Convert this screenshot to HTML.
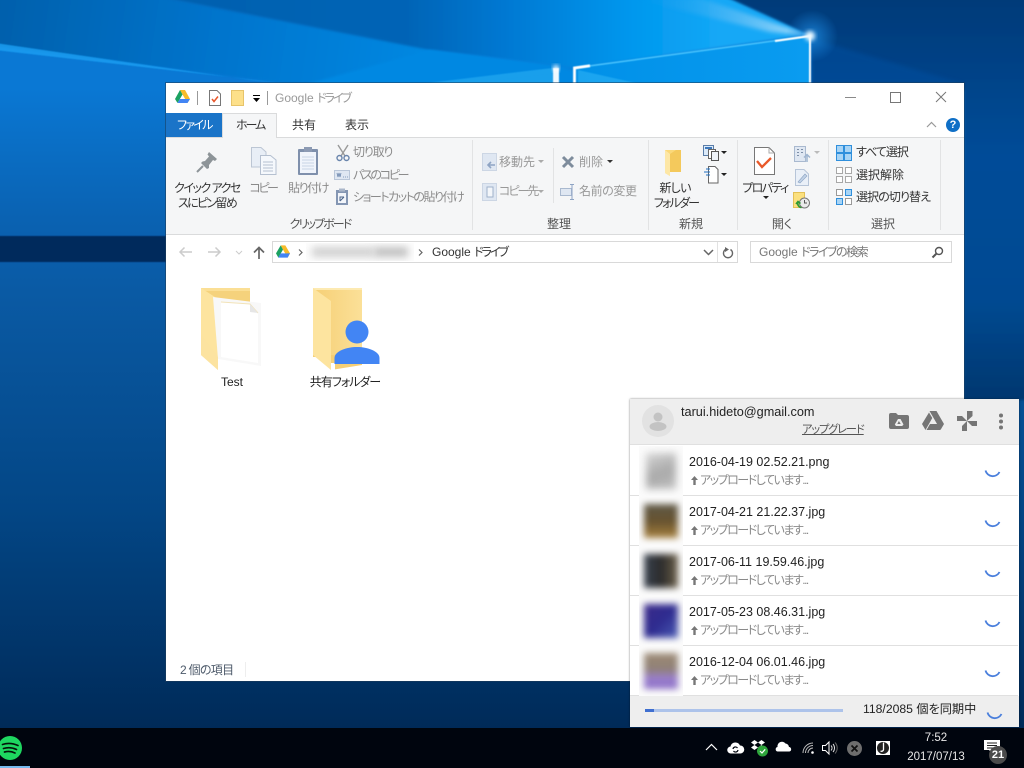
<!DOCTYPE html>
<html lang="ja"><head><meta charset="utf-8"><title>Google ドライブ</title>
<style>
html,body{margin:0;padding:0;width:1024px;height:768px;overflow:hidden;background:#003a78}
body{position:relative;font-family:"Liberation Sans","Noto Sans CJK JP",sans-serif;font-size:12px;font-feature-settings:"palt" 1}
svg{position:absolute;overflow:visible}
.a{position:absolute;white-space:nowrap;line-height:16px;height:16px}
.c{transform:translateX(-50%)}
.g{color:#8b8b8b}.k{color:#333}
.b{position:absolute}
.row{position:absolute;left:630px;width:388px;height:50px;background:#fff;border-bottom:1px solid #e0e0e0;box-sizing:border-box}
.name{position:absolute;left:59px;top:8px;font-size:12.500px;line-height:16px;color:#222;white-space:nowrap}
.sub{position:absolute;left:70px;top:26px;font-size:12px;line-height:16px;color:#8a8a8a;white-space:nowrap;letter-spacing:-1.500px}
.up{position:absolute;left:61px;top:30px;width:7px;height:9px}
.th{position:absolute;left:639px;width:44px;height:50px;background:#fbfbfb;overflow:hidden}
.n{letter-spacing:-2px}
</style></head><body>

<svg width="1024" height="768" style="left:0;top:0" viewBox="0 0 1024 768">
<defs>
<linearGradient id="w1" x1="0" y1="0" x2="0" y2="1"><stop offset="0" stop-color="#0a78d4"/><stop offset=".12" stop-color="#0a78d4"/><stop offset=".3" stop-color="#0a62b2"/><stop offset=".4" stop-color="#0a5aa4"/><stop offset=".7" stop-color="#034685"/><stop offset="1" stop-color="#002a58"/></linearGradient>
<linearGradient id="w2" gradientUnits="userSpaceOnUse" x1="150" y1="0" x2="720" y2="0"><stop offset="0" stop-color="#0060ae"/><stop offset=".45" stop-color="#0064b6"/><stop offset=".62" stop-color="#0078d2"/><stop offset=".85" stop-color="#0098ee"/><stop offset="1" stop-color="#14a8f6"/></linearGradient>
<linearGradient id="w3" x1="0" y1="0" x2="0" y2="1"><stop offset="0" stop-color="#023a78"/><stop offset=".4" stop-color="#034c98"/><stop offset=".75" stop-color="#044a92"/><stop offset="1" stop-color="#00376f"/></linearGradient>
<linearGradient id="w4" gradientUnits="userSpaceOnUse" x1="0" y1="0" x2="430" y2="60"><stop offset="0" stop-color="#0060ac"/><stop offset=".5" stop-color="#0074cc"/><stop offset="1" stop-color="#0088e2"/></linearGradient>
<linearGradient id="w5" x1="0" y1="0" x2="1" y2="0"><stop offset="0" stop-color="#0090e8"/><stop offset="1" stop-color="#0a9cf0"/></linearGradient>
<linearGradient id="w6" x1="0" y1="0" x2="1" y2="0"><stop offset="0" stop-color="#0a90e8" stop-opacity="0"/><stop offset="1" stop-color="#e8f6ff"/></linearGradient>
<radialGradient id="w7"><stop offset="0" stop-color="#1c8ae0" stop-opacity=".8"/><stop offset="1" stop-color="#1c8ae0" stop-opacity="0"/></radialGradient>
<filter id="bl2" x="-30%" y="-30%" width="160%" height="160%"><feGaussianBlur stdDeviation="2"/></filter>
<filter id="bl1" x="-30%" y="-30%" width="160%" height="160%"><feGaussianBlur stdDeviation=".6"/></filter>
<filter id="bl3" x="-10%" y="-10%" width="120%" height="120%"><feGaussianBlur stdDeviation="1.200"/></filter>
</defs>
<rect width="1024" height="730" fill="url(#w1)"/>
<polygon points="-5,-5 150,-5 440,50 575,70 575,90 290,84 -5,46" fill="url(#w4)" filter="url(#bl3)"/>
<polygon points="150,-5 725,-5 812,34 575,68 430,50" fill="url(#w2)" filter="url(#bl3)"/>
<polygon points="430,50 575,68 420,86 300,86" fill="#0088e2" filter="url(#bl3)"/>
<polygon points="630,-2 700,-2 812,36 770,32" fill="url(#w6)" filter="url(#bl2)" opacity=".75"/>
<polygon points="722,-5 1030,-5 1030,400 964,400 964,90 812,90 812,36" fill="url(#w3)" filter="url(#bl3)"/>
<polygon points="810,38 964,84 810,84" fill="#034e9c" opacity=".6" filter="url(#bl2)"/>
<circle cx="812" cy="36" r="26" fill="url(#w7)"/>
<polygon points="575,68 810,36 810,84 575,84" fill="url(#w5)"/>
<polygon points="420,84 535,70 553,68 553,84" fill="#2eb2f4" opacity=".55" filter="url(#bl1)"/>
<polygon points="578,70 640,84 578,84" fill="#30b6f6" opacity=".55" filter="url(#bl1)"/>
<rect x="553" y="68" width="6" height="16" fill="#eef9ff" filter="url(#bl1)"/>
<path d="M574 68L810 36" fill="none" stroke="#4cc6ff" stroke-width="1.500" filter="url(#bl1)"/>
<path d="M574.500 84V68L590 65.800" fill="none" stroke="#fff" stroke-width="2.800" filter="url(#bl1)"/>
<path d="M775 41L810 36V84" fill="none" stroke="#fff" stroke-width="2" filter="url(#bl1)"/>
<circle cx="810" cy="36" r="5" fill="#eaf8ff" filter="url(#bl2)"/>
<circle cx="556" cy="68" r="3" fill="#fff" filter="url(#bl2)"/>
<polygon points="-5,43 250,80 290,84 -5,50" fill="#1aa0f4" opacity=".8" filter="url(#bl1)"/>
<rect x="-5" y="236" width="175" height="26" fill="#032c5c" filter="url(#bl1)"/>
</svg>

<!-- window -->
<div class="b" style="left:166px;top:83px;width:798px;height:598px;background:#fff;box-shadow:0 0 0 1px rgba(30,60,90,.55)"></div>
<div class="b" style="left:166px;top:138px;width:798px;height:96px;background:#f5f6f7;border-top:1px solid #dadbdc;border-bottom:1px solid #dadbdc;box-sizing:content-box;margin-top:-1px"></div>
<div class="b" style="left:166px;top:113px;width:56px;height:24px;background:#1a74c8"></div>
<div class="b" style="left:222px;top:113px;width:55px;height:25px;background:#f5f6f7;border:1px solid #dadbdc;border-bottom:none;box-sizing:border-box"></div>

<!-- ribbon separators -->
<div class="b" style="left:472px;top:140px;width:1px;height:90px;background:#e2e3e4"></div>
<div class="b" style="left:648px;top:140px;width:1px;height:90px;background:#e2e3e4"></div>
<div class="b" style="left:737px;top:140px;width:1px;height:90px;background:#e2e3e4"></div>
<div class="b" style="left:828px;top:140px;width:1px;height:90px;background:#e2e3e4"></div>
<div class="b" style="left:940px;top:140px;width:1px;height:90px;background:#e2e3e4"></div>
<div class="b" style="left:553px;top:148px;width:1px;height:55px;background:#e2e3e4"></div>

<!-- title bar -->
<svg style="left:175px;top:90px" width="15" height="14" viewBox="0 0 15 14"><polygon points="5,0 10,0 15,9 12.500,13 7.500,4.500" fill="#f7bb2a"/><polygon points="5,0 7.500,4.500 2.500,13 0,9" fill="#1ca261"/><polygon points="4.800,9 15,9 12.500,13 2.500,13" fill="#4285f4"/></svg>
<div class="b" style="left:197px;top:91px;width:1px;height:14px;background:#999"></div>
<svg style="left:208px;top:90px" width="14" height="16" viewBox="0 0 14 16"><path d="M1.500.5H9L12.500 4V15.500H1.500Z" fill="#fff" stroke="#777"/><path d="M4 9L6 11.500L10 6.500" fill="none" stroke="#e8562a" stroke-width="1.500"/></svg>
<svg style="left:231px;top:90px" width="14" height="16" viewBox="0 0 14 16"><rect x=".5" y=".5" width="12" height="15" fill="#fde08a" stroke="#e7c46a"/></svg>
<svg style="left:252px;top:94px" width="9" height="9" viewBox="0 0 9 9"><rect x="1" y="1" width="7" height="1" fill="#000"/><polygon points="1,4 8,4 4.500,8" fill="#000"/></svg>
<div class="b" style="left:267px;top:91px;width:1px;height:14px;background:#999"></div>
<div class="a" style="left:275px;top:90px;color:#999">Google <span class="n">ドライブ</span></div>

<div class="b" style="left:845px;top:97px;width:11px;height:1px;background:#8a8a8a"></div>
<div class="b" style="left:890px;top:92px;width:11px;height:11px;border:1px solid #777;box-sizing:border-box"></div>
<svg style="left:935px;top:91px" width="12" height="12" viewBox="0 0 12 12"><path d="M1 1L11 11M11 1L1 11" stroke="#777" stroke-width="1" fill="none"/></svg>

<!-- tabs -->
<div class="a" style="left:177px;top:117px;color:#fff;letter-spacing:-1.700px">ファイル</div>
<div class="a" style="left:236px;top:117px;color:#333;letter-spacing:-2px">ホーム</div>
<div class="a" style="left:292px;top:117px;color:#333">共有</div>
<div class="a" style="left:345px;top:117px;color:#333">表示</div>
<svg style="left:926px;top:121px" width="11" height="7" viewBox="0 0 11 7"><path d="M1 6L5.500 1.500L10 6" fill="none" stroke="#999" stroke-width="1.200"/></svg>
<div class="b" style="left:946px;top:118px;width:14px;height:14px;border-radius:50%;background:#0f6fc6;color:#fff;font-weight:bold;font-size:11px;line-height:14px;text-align:center">?</div>

<!-- clipboard group -->
<svg style="left:196px;top:151px" width="22" height="22" viewBox="0 0 22 22"><path d="M13 1L21 8L19 10L17 9L13 14L13 17L11 18L5 12L6.500 10.500L9 10L13 5.500L11.500 3.500Z" fill="#8d9498"/><path d="M7 15L1 21" stroke="#8d9498" stroke-width="2"/></svg>
<div class="a c k" style="left:207px;top:180px;letter-spacing:-1.500px">クイック アクセ</div>
<div class="a c k" style="left:207px;top:195px;letter-spacing:-1.700px">スにピン留め</div>
<svg style="left:251px;top:147px" width="26" height="28" viewBox="0 0 26 28"><path d="M.5.500H10L15 5V20H.5Z" fill="#e8eef6" stroke="#bcc6d4"/><path d="M9.500 8.500H19.500L25 13V27.500H9.500Z" fill="#f5f8fc" stroke="#b5c0d0"/><path d="M12 15H22M12 18H22M12 21H22M12 24H22" stroke="#b5c0d0"/></svg>
<div class="a c g" style="left:263px;top:180px;letter-spacing:-2.500px">コピー</div>
<svg style="left:297px;top:146px" width="22" height="30" viewBox="0 0 22 30"><rect x="1" y="3" width="20" height="26" rx="1" fill="#7f90ac"/><rect x="3" y="6" width="16" height="21" fill="#f0f4fb"/><path d="M5 11H17M5 14H17M5 17H17M5 20H17M5 23H17" stroke="#c9d3e6"/><rect x="7" y="1" width="8" height="5" fill="#8c9ab3"/></svg>
<div class="a c g" style="left:308px;top:180px;letter-spacing:-1.500px">貼り付け</div>
<svg style="left:336px;top:144px" width="14" height="18" viewBox="0 0 14 18"><path d="M2 1L9 12M12 1L5 12" stroke="#999" stroke-width="1.400" fill="none"/><circle cx="3.500" cy="14" r="2.500" fill="none" stroke="#6a85ac" stroke-width="1.400"/><circle cx="10.500" cy="14" r="2.500" fill="none" stroke="#6a85ac" stroke-width="1.400"/></svg>
<div class="a g" style="left:353px;top:144px;letter-spacing:-1.200px">切り取り</div>
<svg style="left:334px;top:170px" width="16" height="10" viewBox="0 0 16 10"><rect x=".5" y=".5" width="15" height="9" fill="#dfe7f2" stroke="#b9c6d8"/><path d="M3 3L4 7L5 3L6 7L7 3M9 7H10M11 7H12M13 7H14" stroke="#6a85ac" fill="none" stroke-width=".8"/></svg>
<div class="a g" style="left:353px;top:167px;letter-spacing:-2.300px">パスのコピー</div>
<svg style="left:335px;top:188px" width="14" height="18" viewBox="0 0 14 18"><rect x="1" y="2" width="12" height="15" fill="#8496b3"/><rect x="4" y=".5" width="6" height="3" fill="#aab6c9"/><rect x="3" y="5" width="8" height="10" fill="#f2f5fa"/><path d="M5 13V9H9M5 13L9 9" stroke="#4a6389" fill="none"/></svg>
<div class="a g" style="left:353px;top:189px;letter-spacing:-1.500px">ショートカットの貼り付け</div>
<div class="a c k" style="left:320px;top:216px;color:#555;letter-spacing:-1.900px">クリップボード</div>

<!-- organise -->
<svg style="left:482px;top:153px" width="15" height="18" viewBox="0 0 15 18"><rect x=".5" y=".5" width="14" height="17" fill="#dfe7f2" stroke="#ccd6e4"/><path d="M13 12H7M9 9L6 12L9 15" stroke="#8ea4c4" stroke-width="1.600" fill="none"/></svg>
<div class="a g" style="left:499px;top:154px;color:#999">移動先</div>
<svg style="left:538px;top:160px" width="6" height="4"><polygon points="0,0 6,0 3,3" fill="#aaa"/></svg>
<svg style="left:482px;top:183px" width="15" height="18" viewBox="0 0 15 18"><rect x=".5" y=".5" width="14" height="17" fill="#dfe7f2" stroke="#ccd6e4"/><path d="M5 4H11V14H5Z" fill="#f3f6fa" stroke="#9fb1ca"/></svg>
<div class="a g" style="left:499px;top:183px;color:#999;letter-spacing:-2px">コピー先</div>
<svg style="left:538px;top:190px" width="6" height="4"><polygon points="0,0 6,0 3,3" fill="#aaa"/></svg>
<svg style="left:561px;top:155px" width="14" height="14" viewBox="0 0 14 14"><path d="M2 2L12 12M12 2L2 12" stroke="#7e8c9c" stroke-width="3" fill="none"/></svg>
<div class="a g" style="left:579px;top:154px;color:#999">削除</div>
<svg style="left:607px;top:160px" width="6" height="4"><polygon points="0,0 6,0 3,3" fill="#333"/></svg>
<svg style="left:560px;top:184px" width="16" height="16" viewBox="0 0 16 16"><rect x=".5" y="4.500" width="11" height="7" fill="#dfe7f2" stroke="#a9b9cf"/><path d="M10 .5H14M12 .5V15.500M10 15.500H14" stroke="#8ea4c4" fill="none"/></svg>
<div class="a g" style="left:579px;top:183px;color:#999;letter-spacing:-.4px">名前の変更</div>
<div class="a c k" style="left:559px;top:216px;color:#555">整理</div>

<!-- new -->
<svg style="left:664px;top:148px" width="20" height="28" viewBox="0 0 20 28"><polygon points="1,2 17,2 17,24 6,24 6,28 1,25" fill="#fbd97a"/><polygon points="1,2 6,6 6,28 1,25" fill="#fde7a6"/><polygon points="6,6 12,2 17,2 17,24 6,24" fill="#f4c95c"/></svg>
<div class="a c k" style="left:675px;top:180px;letter-spacing:-.7px">新しい</div>
<div class="a c k" style="left:676px;top:195px;letter-spacing:-1.800px">フォルダー</div>
<svg style="left:703px;top:145px" width="24" height="17" viewBox="0 0 24 17"><rect x=".5" y=".5" width="10" height="10" fill="#dcebfa" stroke="#5a7da8"/><rect x="2" y="2" width="7" height="2" fill="#3d78bc"/><rect x="5.500" y="4.500" width="7" height="9" fill="#fff" stroke="#666"/><rect x="8.500" y="6.500" width="7" height="9" fill="#eef3f9" stroke="#555"/><polygon points="18,6 24,6 21,9" fill="#222"/></svg>
<svg style="left:703px;top:166px" width="24" height="18" viewBox="0 0 24 18"><path d="M5.500 .5H12L15 3.500V17H5.500Z" fill="#fff" stroke="#666"/><path d="M3 3H7M1 6H7M3 9H7" stroke="#1e6fc0" fill="none"/><polygon points="18,7 24,7 21,10" fill="#222"/></svg>
<div class="a c k" style="left:691px;top:216px;color:#555">新規</div>

<!-- open -->
<svg style="left:754px;top:147px" width="21" height="28" viewBox="0 0 21 28"><path d="M.5.500H15L20.500 6V27.500H.5Z" fill="#fff" stroke="#777"/><path d="M15 .5V6H20.500" fill="none" stroke="#aaa"/><path d="M3 14L8 20L17 11" fill="none" stroke="#e9592a" stroke-width="2.300"/></svg>
<div class="a c k" style="left:765px;top:180px;letter-spacing:-1.600px">プロパティ</div>
<svg style="left:763px;top:196px" width="6" height="4"><polygon points="0,0 6,0 3,3" fill="#222"/></svg>
<svg style="left:794px;top:146px" width="26" height="16" viewBox="0 0 26 16"><rect x=".5" y=".5" width="11" height="15" fill="#dfe7f2" stroke="#a9b9cf"/><path d="M3 3.500H5M3 6.500H5M3 9.500H5M7 3.500H9M7 6.500H9" stroke="#7d8fa8"/><path d="M13 16V9M10 11.500L13 8.500L16 11.500" stroke="#9fb5d0" stroke-width="1.500" fill="none"/><polygon points="20,5 26,5 23,8" fill="#bbb"/></svg>
<svg style="left:795px;top:169px" width="14" height="17" viewBox="0 0 14 17"><path d="M.5.500H9L13.500 5V16.500H.5Z" fill="#eaf0f8" stroke="#b7c5d8"/><path d="M3 13L10 5L12 7L5 14Z" fill="#c2d2e6" stroke="#8ca4c4" stroke-width=".6"/></svg>
<svg style="left:793px;top:192px" width="17" height="17" viewBox="0 0 17 17"><rect x=".5" y=".5" width="11" height="15" fill="#fbe07e" stroke="#e3c056"/><circle cx="11.500" cy="11" r="5" fill="#eaeaea" stroke="#777"/><path d="M11.500 8V11H14" stroke="#555" fill="none"/><path d="M8.500 15.500A4 4 0 0 1 5 10M3 12L5 9.500L7.500 11.500" stroke="#2d9a35" stroke-width="1.600" fill="none"/></svg>
<div class="a c k" style="left:782px;top:216px;color:#555">開く</div>

<!-- select -->
<svg style="left:836px;top:145px" width="16" height="16" viewBox="0 0 16 16"><rect width="16" height="16" fill="#2f8fdc"/><rect x="1" y="1" width="6" height="6" fill="#a8d4f5"/><rect x="9" y="1" width="6" height="6" fill="#a8d4f5"/><rect x="1" y="9" width="6" height="6" fill="#a8d4f5"/><rect x="9" y="9" width="6" height="6" fill="#a8d4f5"/></svg>
<div class="a k" style="left:856px;top:144px;letter-spacing:-1px">すべて選択</div>
<svg style="left:836px;top:167px" width="16" height="16" viewBox="0 0 16 16"><g fill="#fff" stroke="#a8a8a8"><rect x=".5" y=".5" width="6" height="6"/><rect x="9.500" y=".5" width="6" height="6"/><rect x=".5" y="9.500" width="6" height="6"/><rect x="9.500" y="9.500" width="6" height="6"/></g></svg>
<div class="a k" style="left:856px;top:167px">選択解除</div>
<svg style="left:836px;top:189px" width="16" height="16" viewBox="0 0 16 16"><g stroke="#2f8fdc"><rect x=".5" y=".5" width="6" height="6" fill="#fff" stroke="#999"/><rect x="9.500" y=".5" width="6" height="6" fill="#a8d4f5"/><rect x=".5" y="9.500" width="6" height="6" fill="#a8d4f5"/><rect x="9.500" y="9.500" width="6" height="6" fill="#fff" stroke="#999"/></g></svg>
<div class="a k" style="left:856px;top:189px;letter-spacing:-.9px">選択の切り替え</div>
<div class="a c k" style="left:883px;top:216px;color:#555">選択</div>

<!-- address bar -->
<svg style="left:178px;top:246px" width="15" height="12" viewBox="0 0 15 12"><path d="M14 6H2M6.500 1.500L2 6L6.500 10.500" stroke="#ccc" stroke-width="1.500" fill="none"/></svg>
<svg style="left:207px;top:246px" width="15" height="12" viewBox="0 0 15 12"><path d="M1 6H13M8.500 1.500L13 6L8.500 10.500" stroke="#ccc" stroke-width="1.500" fill="none"/></svg>
<svg style="left:235px;top:250px" width="8" height="5" viewBox="0 0 8 5"><path d="M1 1L4 4L7 1" stroke="#ccc" fill="none"/></svg>
<svg style="left:253px;top:246px" width="12" height="13" viewBox="0 0 12 13"><path d="M6 13V2M1 6.500L6 1.500L11 6.500" stroke="#666" stroke-width="1.700" fill="none"/></svg>
<div class="b" style="left:272px;top:241px;width:466px;height:22px;border:1px solid #d9d9d9;box-sizing:border-box;background:#fff"></div>
<div class="b" style="left:717px;top:242px;width:1px;height:20px;background:#e2e2e2"></div>
<svg style="left:276px;top:245px" width="14" height="13" viewBox="0 0 15 13"><polygon points="5,0 10,0 15,8.500 12.500,13 7.500,4.500" fill="#f7bb2a"/><polygon points="5,0 7.500,4.500 2.500,13 0,8.500" fill="#1ca261"/><polygon points="4.800,8.500 15,8.500 12.500,13 2.500,13" fill="#4285f4"/></svg>
<svg style="left:298px;top:249px" width="5" height="7" viewBox="0 0 5 7"><path d="M1 .5L4 3.500L1 6.500" stroke="#666" fill="none" stroke-width="1.200"/></svg>
<div class="b" style="left:306px;top:243px;width:108px;height:18px;background:#fdfdfd;overflow:hidden"><div style="position:absolute;left:6px;top:4px;width:62px;height:10px;background:#d0d0d0;filter:blur(4px)"></div><div style="position:absolute;left:68px;top:4px;width:34px;height:10px;background:#c0c0c0;filter:blur(4px)"></div></div>
<svg style="left:418px;top:249px" width="5" height="7" viewBox="0 0 5 7"><path d="M1 .5L4 3.500L1 6.500" stroke="#666" fill="none" stroke-width="1.200"/></svg>
<div class="a" style="left:432px;top:244px;color:#333">Google <span class="n">ドライブ</span></div>
<svg style="left:703px;top:249px" width="11" height="7" viewBox="0 0 11 7"><path d="M1 1L5.500 5.500L10 1" stroke="#666" stroke-width="1.500" fill="none"/></svg>
<svg style="left:722px;top:246px" width="12" height="13" viewBox="0 0 12 13"><path d="M8.500 3.500A4.500 4.500 0 1 1 3.500 3.500" stroke="#666" stroke-width="1.400" fill="none"/><polygon points="3,1 7,3.500 3,6" fill="#666"/></svg>
<div class="b" style="left:750px;top:241px;width:202px;height:22px;border:1px solid #d9d9d9;box-sizing:border-box;background:#fff"></div>
<div class="a" style="left:759px;top:244px;color:#777">Google <span style="letter-spacing:-1.500px">ドライブの検索</span></div>
<svg style="left:931px;top:246px" width="13" height="13" viewBox="0 0 13 13"><circle cx="8" cy="5" r="3.500" fill="none" stroke="#555" stroke-width="1.400"/><path d="M5.500 7.500L1.500 11.500" stroke="#555" stroke-width="2"/></svg>

<!-- folders -->
<svg style="left:198px;top:285px" width="72" height="90" viewBox="0 0 72 90">
<polygon points="3,3 52,3 52,72 22,72" fill="#f5d27c"/>
<rect x="3" y="3" width="49" height="3" fill="#fbdf95"/>
<polygon points="3,3 20,14 20,85 3,70" fill="#fde49f"/>
<polygon points="15,12 63,18 63,81 20,74" fill="#f8f8f8"/>
<polygon points="23,17 52,19 60,28 60,78 23,72" fill="#fff"/>
<path d="M23 17L52 19L60 28" fill="none" stroke="#f2e3b8"/>
<polygon points="52,19 60,28 52,27" fill="#e6e6e6"/>
<polygon points="20,72 20,85 3,70 3,50" fill="#fce3a0"/>
</svg>
<svg style="left:310px;top:285px" width="72" height="90" viewBox="0 0 72 90">
<defs><linearGradient id="fd" x1="0" y1="0" x2="1" y2="0"><stop offset="0" stop-color="#f6cf75"/><stop offset="1" stop-color="#fbe098"/></linearGradient></defs>
<rect x="3" y="3" width="49" height="69" fill="url(#fd)"/>
<rect x="3" y="3" width="49" height="2" fill="#fdeab2"/>
<polygon points="3,3 21,16 21,85 3,70" fill="#fde49f"/>
<polygon points="21,70 52,70 52,80 21,85" fill="#f6cf75"/>
<polygon points="21,78 25,78 25,85 21,85" fill="#fff"/>
</svg>
<svg style="left:334px;top:320px" width="46" height="45" viewBox="0 0 46 45"><circle cx="23" cy="12" r="11.500" fill="#4285f4"/><path d="M.5 44V38C.5 31 13 27 23 27S45.500 31 45.500 38V44Z" fill="#4285f4"/></svg>
<div class="a c" style="left:232px;top:374px;color:#222">Test</div>
<div class="a c" style="left:345px;top:374px;color:#222;letter-spacing:-1px">共有フォルダー</div>

<!-- status -->
<div class="a" style="left:180px;top:662px;color:#4d5a6a;letter-spacing:-.7px">2 個の項目</div>
<div class="b" style="left:245px;top:662px;width:1px;height:15px;background:#eee"></div>

<!-- drive popup -->
<div class="b" style="left:630px;top:399px;width:389px;height:328px;background:#fff;box-shadow:0 0 2px rgba(0,0,0,.5)"></div>
<div class="b" style="left:630px;top:399px;width:389px;height:46px;background:#eee;border-bottom:1px solid #e0e0e0;box-sizing:border-box"></div>
<svg style="left:642px;top:405px" width="32" height="32" viewBox="0 0 32 32"><circle cx="16" cy="16" r="16" fill="#e2e2e2"/><circle cx="16" cy="12" r="4.500" fill="#c3c3c3"/><ellipse cx="16" cy="21.500" rx="8.500" ry="4.500" fill="#c3c3c3"/></svg>
<div class="a" style="left:681px;top:404px;font-size:12.700px;color:#222">tarui.hideto@gmail.com</div>
<div class="a" style="left:802px;top:422px;font-size:11.200px;color:#555;text-decoration:underline;letter-spacing:-1.100px">アップグレード</div>
<svg style="left:889px;top:413px" width="20" height="16" viewBox="0 0 20 16"><path d="M0 2Q0 0 2 0H7L9 2H18Q20 2 20 4V14Q20 16 18 16H2Q0 16 0 14Z" fill="#757575"/><path d="M9 6H11.500L14.500 11.500L13.200 13H7L5.800 11.500Z" fill="#eee"/><path d="M9.900 8L8.300 11H11.700Z" fill="#757575"/></svg>
<svg style="left:922px;top:411px" width="22" height="19" viewBox="0 0 22 19"><polygon points="7.500,0 14.500,0 22,13 18.500,19 11,6" fill="#757575"/><polygon points="7,1.500 10.300,7 3.500,19 0,13" fill="#757575"/><polygon points="8,13 21.500,13 18,19 4.500,19" fill="#757575"/></svg>
<svg style="left:957px;top:411px" width="20" height="20" viewBox="0 0 20 20" fill="#757575"><polygon points="10,10 10,0 15.500,0 15.500,5"/><polygon points="10,10 20,10 20,15 15,15"/><polygon points="10,10 10,20 5,20 5,15"/><polygon points="10,10 0,10 0,5 5,5"/></svg>
<svg style="left:998px;top:413px" width="6" height="17" viewBox="0 0 6 17" fill="#757575"><circle cx="3" cy="2.500" r="2"/><circle cx="3" cy="8.500" r="2"/><circle cx="3" cy="14.500" r="2"/></svg>

<div class="row" style="top:446px"><div class="name">2016-04-19 02.52.21.png</div><svg class="up" viewBox="0 0 7 9"><path d="M3.500 0L7 4H4.700V9H2.300V4H0Z" fill="#777"/></svg><div class="sub">アップロードしています...</div></div>
<div class="row" style="top:496px"><div class="name">2017-04-21 21.22.37.jpg</div><svg class="up" viewBox="0 0 7 9"><path d="M3.500 0L7 4H4.700V9H2.300V4H0Z" fill="#777"/></svg><div class="sub">アップロードしています...</div></div>
<div class="row" style="top:546px"><div class="name">2017-06-11 19.59.46.jpg</div><svg class="up" viewBox="0 0 7 9"><path d="M3.500 0L7 4H4.700V9H2.300V4H0Z" fill="#777"/></svg><div class="sub">アップロードしています...</div></div>
<div class="row" style="top:596px"><div class="name">2017-05-23 08.46.31.jpg</div><svg class="up" viewBox="0 0 7 9"><path d="M3.500 0L7 4H4.700V9H2.300V4H0Z" fill="#777"/></svg><div class="sub">アップロードしています...</div></div>
<div class="row" style="top:646px"><div class="name">2016-12-04 06.01.46.jpg</div><svg class="up" viewBox="0 0 7 9"><path d="M3.500 0L7 4H4.700V9H2.300V4H0Z" fill="#777"/></svg><div class="sub">アップロードしています...</div></div>

<div class="th" style="top:446px"><div style="position:absolute;left:7px;top:7px;width:30px;height:36px;background:linear-gradient(160deg,#d6d6d6,#a9a9a9 55%,#c0c0c0);filter:blur(4px)"></div></div>
<div class="th" style="top:496px"><div style="position:absolute;left:5px;top:8px;width:34px;height:34px;background:linear-gradient(180deg,#5f5948,#66522f 50%,#a8823f);filter:blur(3.500px)"></div></div>
<div class="th" style="top:546px"><div style="position:absolute;left:5px;top:8px;width:34px;height:34px;background:linear-gradient(90deg,#3a4350,#2b2b2b 50%,#6c604a);filter:blur(3.500px)"></div></div>
<div class="th" style="top:596px"><div style="position:absolute;left:5px;top:8px;width:34px;height:34px;background:linear-gradient(135deg,#3b2a8a,#2e2b8f 50%,#4a5cb4);filter:blur(3.500px)"></div></div>
<div class="th" style="top:646px"><div style="position:absolute;left:5px;top:7px;width:34px;height:36px;background:linear-gradient(180deg,#9d8b76,#8f8076 45%,#9a7fcf 70%,#8a6cc4);filter:blur(3.500px)"></div></div>

<svg style="left:984px;top:469px" width="17" height="9" viewBox="0 0 17 9"><path d="M1.500 1.500A7.500 7.500 0 0 0 15.500 3" fill="none" stroke="#4a7fdc" stroke-width="1.800"/></svg>
<svg style="left:984px;top:519px" width="17" height="9" viewBox="0 0 17 9"><path d="M1.500 1.500A7.500 7.500 0 0 0 15.500 3" fill="none" stroke="#4a7fdc" stroke-width="1.800"/></svg>
<svg style="left:984px;top:569px" width="17" height="9" viewBox="0 0 17 9"><path d="M1.500 1.500A7.500 7.500 0 0 0 15.500 3" fill="none" stroke="#4a7fdc" stroke-width="1.800"/></svg>
<svg style="left:984px;top:619px" width="17" height="9" viewBox="0 0 17 9"><path d="M1.500 1.500A7.500 7.500 0 0 0 15.500 3" fill="none" stroke="#4a7fdc" stroke-width="1.800"/></svg>
<svg style="left:984px;top:669px" width="17" height="9" viewBox="0 0 17 9"><path d="M1.500 1.500A7.500 7.500 0 0 0 15.500 3" fill="none" stroke="#4a7fdc" stroke-width="1.800"/></svg>

<div class="b" style="left:630px;top:696px;width:389px;height:31px;background:#eee"></div>
<div class="b" style="left:645px;top:709px;width:198px;height:3px;background:#adc3ea"></div>
<div class="b" style="left:645px;top:709px;width:9px;height:3px;background:#3f6fd0"></div>
<div class="a" style="left:863px;top:701px;color:#222;font-size:12.200px">118/2085 個を同期中</div>
<svg style="left:986px;top:711px" width="17" height="9" viewBox="0 0 17 9"><path d="M1.500 1.500A7.500 7.500 0 0 0 15.500 3" fill="none" stroke="#4a7fdc" stroke-width="1.800"/></svg>

<!-- taskbar -->
<div class="b" style="left:0;top:728px;width:1024px;height:40px;background:#00050e"></div>
<div class="b" style="left:0;top:766px;width:30px;height:2px;background:#76b9ed"></div>
<svg style="left:-2px;top:736px" width="24" height="24" viewBox="0 0 24 24"><circle cx="12" cy="12" r="12" fill="#1ed760"/><path d="M4.500 8.500Q12 6 20 9.500M5.500 12.500Q12 10.500 18.500 13.500M6.500 16Q12 14.500 17 17" stroke="#04140a" stroke-width="1.700" fill="none" stroke-linecap="round"/></svg>

<svg style="left:705px;top:743px" width="13" height="8" viewBox="0 0 13 8"><path d="M1 7L6.500 1.500L12 7" stroke="#fff" stroke-width="1.200" fill="none"/></svg>
<svg style="left:727px;top:741px" width="17" height="13" viewBox="0 0 17 13"><path d="M4 12.500A3.500 3.500 0 0 1 3.500 5.500A5 5 0 0 1 13 4.500A4 4 0 0 1 13.500 12.500Z" fill="#fff"/><path d="M6 8A2.500 2.500 0 0 1 10.500 7M11 9A2.500 2.500 0 0 1 6.500 10" stroke="#00050e" stroke-width="1.200" fill="none"/></svg>
<svg style="left:751px;top:739px" width="18" height="18" viewBox="0 0 18 18"><g fill="#fff"><polygon points="3.500,1 7,3.500 3.500,6 0,3.500"/><polygon points="10.500,1 14,3.500 10.500,6 7,3.500"/><polygon points="3.500,6 7,8.500 3.500,11 0,8.500"/><polygon points="10.500,6 14,8.500 10.500,11 7,8.500"/></g><circle cx="11.500" cy="12" r="5.500" fill="#2ea53c"/><path d="M9 12L11 14L14.200 10.300" stroke="#fff" stroke-width="1.200" fill="none"/></svg>
<svg style="left:775px;top:741px" width="17" height="11" viewBox="0 0 17 11"><path d="M2.500 10.500A2.300 2.300 0 0 1 2.500 6A4.500 4.500 0 0 1 10.500 2.500A3.800 3.800 0 0 1 14 6A2.300 2.300 0 0 1 14.500 10.500Z" fill="#fff"/></svg>
<svg style="left:802px;top:742px" width="13" height="13" viewBox="0 0 13 13"><g fill="none" stroke="#bbb" stroke-width="1"><path d="M1 11A10 10 0 0 1 11 1"/><path d="M3.500 11A7.500 7.500 0 0 1 11 3.500" /><path d="M6 11A5 5 0 0 1 11 6"/></g><circle cx="10.500" cy="10.500" r="1.300" fill="#fff"/></svg>
<svg style="left:822px;top:741px" width="16" height="14" viewBox="0 0 16 14"><path d="M.5 4.500H3.500L7 1V13L3.500 9.500H.5Z" fill="none" stroke="#fff"/><path d="M9 4.500A3.500 3.500 0 0 1 9 9.500M11 3A6 6 0 0 1 11 11" stroke="#ddd" fill="none"/><path d="M13 1.500A8 8 0 0 1 13 12.500" stroke="#666" fill="none"/></svg>
<svg style="left:847px;top:741px" width="15" height="15" viewBox="0 0 15 15"><circle cx="7.500" cy="7.500" r="7.500" fill="#6e6e6e"/><path d="M4.500 4.500L10.500 10.500M10.500 4.500L4.500 10.500" stroke="#111" stroke-width="1.700"/></svg>
<svg style="left:876px;top:741px" width="14" height="14" viewBox="0 0 14 14"><rect width="14" height="14" fill="#fff"/><circle cx="7" cy="7" r="6" fill="#222"/><path d="M7.500 1.500V8A2 2 0 0 1 4.500 10" stroke="#fff" stroke-width="1.300" fill="none"/></svg>
<div class="a c" style="left:936px;top:730px;color:#e8e8e8;font-size:11.500px">7:52</div>
<div class="a c" style="left:936px;top:749px;color:#e8e8e8;font-size:11.500px">2017/07/13</div>
<svg style="left:984px;top:740px" width="16" height="13" viewBox="0 0 16 13"><path d="M0 0H16V10H8V13L5 10H0Z" fill="#fff"/><path d="M3 3H13M3 5.500H13M3 8H9" stroke="#222"/></svg>
<div class="b" style="left:989px;top:746px;width:18px;height:18px;border-radius:50%;background:#4b4b4b;color:#fff;font-size:11px;line-height:18px;text-align:center;font-weight:bold">21</div>
</body></html>
